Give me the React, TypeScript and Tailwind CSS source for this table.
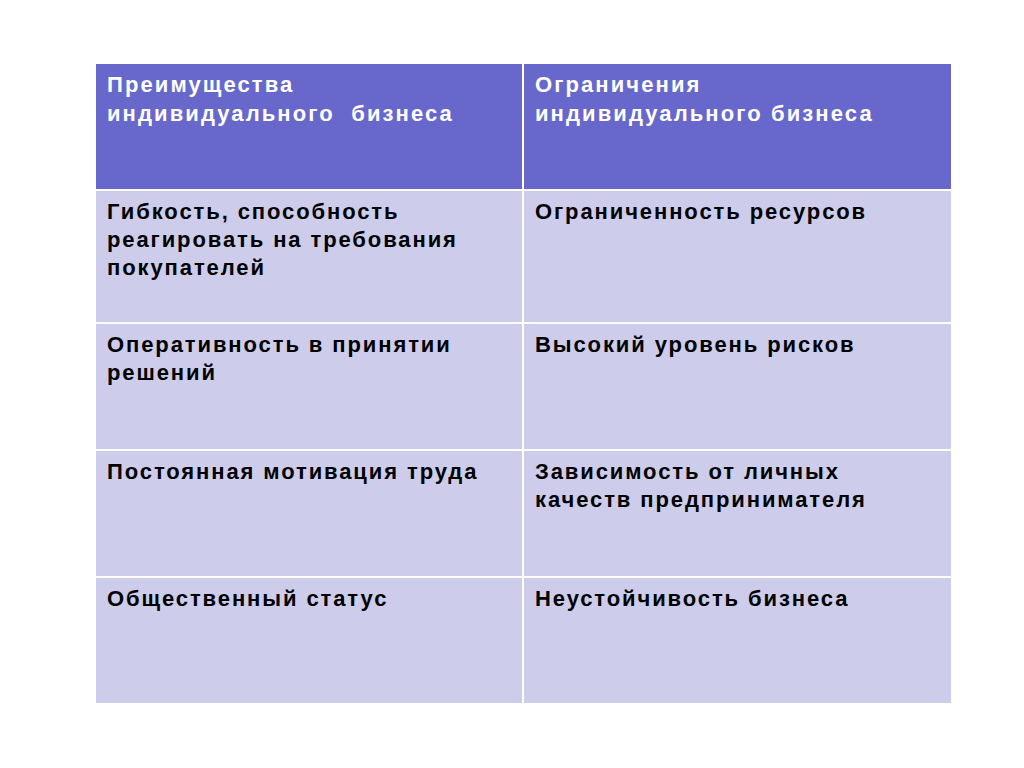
const rows: [string, string][] = [
  ["Гибкость, способность реагировать на требования покупателей", "Ограниченность ресурсов"],
  ["Оперативность в принятии решений", "Высокий уровень рисков"],
  ["Постоянная мотивация труда", "Зависимость от личных качеств предпринимателя"],
  ["Общественный статус", "Неустойчивость бизнеса"],
];

export default function App() {
  return (
    <div className="h-[768px] w-[1024px] bg-white pt-[64px] pl-[96px] font-['Liberation_Sans',Arial,sans-serif]">
      <div className="grid w-[855px] grid-cols-[426px_427px] grid-rows-[125px_131px_125px_125px_125px] gap-[2px] bg-white">
        <div className="bg-[#6868cc] px-[11px] pt-[6px] text-[22px] leading-[29px] font-bold tracking-[2.1px] text-white">
          Преимущества<br />индивидуального&nbsp; бизнеса
        </div>
        <div className="bg-[#6868cc] px-[11px] pt-[6px] text-[22px] leading-[29px] font-bold tracking-[2.1px] text-white">
          Ограничения<br />индивидуального бизнеса
        </div>
        {rows.map(([a, b]) => (
          <>
            <div key={a} className="bg-[#cdcdeb] pl-[11px] pr-[20px] pt-[7px] text-[22px] leading-[28px] font-bold tracking-[1.9px] text-black">
              {a}
            </div>
            <div key={b} className="bg-[#cdcdeb] pl-[11px] pr-[20px] pt-[7px] text-[22px] leading-[28px] font-bold tracking-[1.9px] text-black">
              {b}
            </div>
          </>
        ))}
      </div>
    </div>
  );
}
